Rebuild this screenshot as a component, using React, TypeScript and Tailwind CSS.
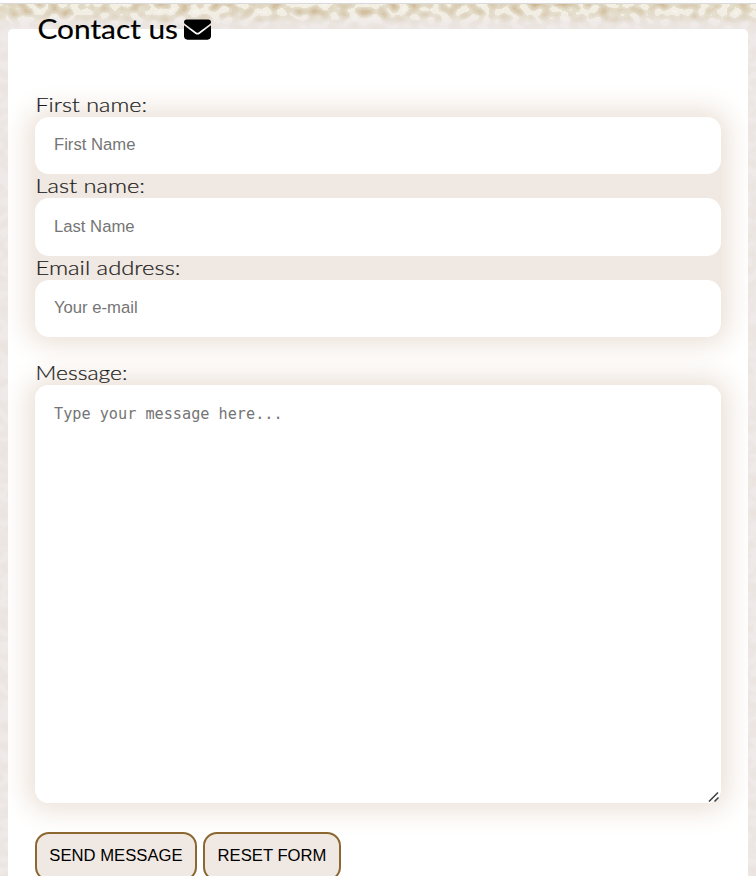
import { FaEnvelope } from "react-icons/fa6";

const fields = [
  { label: "First name:", placeholder: "First Name", height: "h-[57px]", padding: "pb-[2px]", textLength: 111.5 },
  { label: "Last name:", placeholder: "Last Name", height: "h-[58px]", padding: "pb-px", textLength: 109.5 },
  { label: "Email address:", placeholder: "Your e-mail", height: "h-[57px]", padding: "pb-[2px]", textLength: 145 },
];

function Label({ text, length }: { text: string; length: number }) {
  return (
    <svg className="block h-6 w-[200px] overflow-visible" aria-label={text}>
      <text x="0.5" y="19" textLength={length} lengthAdjust="spacingAndGlyphs" strokeWidth=".2" className="fill-[#1c1c1c] stroke-[#1c1c1c] font-['Lato',sans-serif] text-[20.5px] font-light">
        {text}
      </text>
    </svg>
  );
}

function Texture() {
  return (
    <svg className="absolute inset-0 h-full w-full" aria-hidden="true">
      <defs>
        <filter id="weave" x="0" y="0" width="100%" height="100%" colorInterpolationFilters="sRGB">
          <feTurbulence type="fractalNoise" baseFrequency="0.1 0.12" numOctaves="1" seed="21" />
          <feColorMatrix values="1 0 0 0 0  1 0 0 0 0  1 0 0 0 0  0 0 0 0 1" />
          <feComponentTransfer>
            <feFuncR type="discrete" tableValues=".80 .80 .80 .80 .80 .82 .84 .85 .86 .88 .89 .96 .96 .96 .97 .97 .97 .97 .97 .97" />
            <feFuncG type="discrete" tableValues=".71 .71 .71 .71 .71 .74 .78 .80 .81 .84 .86 .94 .94 .94 .96 .96 .96 .96 .96 .96" />
            <feFuncB type="discrete" tableValues=".54 .54 .54 .54 .54 .60 .66 .69 .71 .75 .78 .89 .89 .89 .93 .93 .93 .93 .93 .93" />
          </feComponentTransfer>
        </filter>
        <linearGradient id="veil" gradientUnits="userSpaceOnUse" x1="0" y1="3" x2="0" y2="32">
          <stop offset="0" stopColor="#eee9e9" stopOpacity="0" />
          <stop offset=".4" stopColor="#eee9e9" stopOpacity=".25" />
          <stop offset=".7" stopColor="#eee9e9" stopOpacity=".82" />
          <stop offset="1" stopColor="#eee9e9" stopOpacity=".88" />
        </linearGradient>
      </defs>
      <rect width="756" height="876" filter="url(#weave)" />
      <rect width="756" height="876" fill="url(#veil)" />
    </svg>
  );
}

export default function App() {
  return (
    <main className="relative h-[876px] w-[756px] overflow-hidden bg-[#eee9e9] font-['Liberation_Sans',sans-serif]">
      <Texture />
      <div className="relative h-full px-2">
        <div className="-mx-2 h-1 border-b border-[#d9d9dc] bg-[#fdfdfd]" />
        <div className="h-[25px]" />
        <section className="flow-root h-[855px] rounded-t-[5px] bg-white px-[27px]">
          <h1 className="-mt-[15px] flex h-8 items-center">
            <svg className="block h-8 w-[149px] overflow-visible" aria-label="Contact us">
              <text x="2.5" y="25" textLength="140.5" lengthAdjust="spacingAndGlyphs" strokeWidth=".2" className="fill-black stroke-black font-['Lato',sans-serif] text-[26px] font-normal">
                Contact us
              </text>
            </svg>
            <FaEnvelope className="-mt-px size-[27px]" />
          </h1>
          <form className="pt-[47px]">
            <div className="relative">
              <div className="absolute inset-x-0 top-6 bottom-0 rounded-[14px] bg-[#f0e8e2] shadow-[0_0_26px_9px_#ede3da]" />
              <div className="relative">
                {fields.map((f) => (
                  <label key={f.label} className="block">
                    <Label text={f.label} length={f.textLength} />
                    <input placeholder={f.placeholder} className={`${f.height} ${f.padding} block w-full rounded-[14px] bg-white px-[19px] text-[16.67px] outline-none placeholder:text-[#757575]`} />
                  </label>
                ))}
              </div>
            </div>
            <label className="relative mt-6 block">
              <div className="absolute inset-x-0 top-6 bottom-0 rounded-[14px] shadow-[0_0_26px_9px_#ede3da]" />
              <div className="relative">
                <Label text="Message:" length={92} />
                <textarea placeholder="Type your message here..." className="block h-[418px] w-full resize-none rounded-[14px] bg-white px-[19px] py-[19px] font-['DejaVu_Sans_Mono',monospace] text-[15.2px] leading-[20px] outline-none placeholder:text-[#757575]" />
                <svg viewBox="0 0 12 12" className="absolute right-px bottom-0 size-3" aria-hidden="true">
                  <path d="M1 10.5L10 1.5M6.5 10.5L10.5 6.5" stroke="#444" strokeWidth="1.6" fill="none" />
                </svg>
              </div>
            </label>
            <div className="relative mt-[29px] flex gap-[6px] text-[16.67px] text-black">
              <button type="button" className="h-[49px] w-[162px] rounded-[14px] border-2 border-[#8c6830] bg-[#f0e8e2] pb-[2px] whitespace-nowrap">SEND MESSAGE</button>
              <button type="button" className="h-[49px] w-[138px] rounded-[14px] border-2 border-[#8c6830] bg-[#f0e8e2] pb-[2px] whitespace-nowrap">RESET FORM</button>
            </div>
          </form>
        </section>
      </div>
    </main>
  );
}
